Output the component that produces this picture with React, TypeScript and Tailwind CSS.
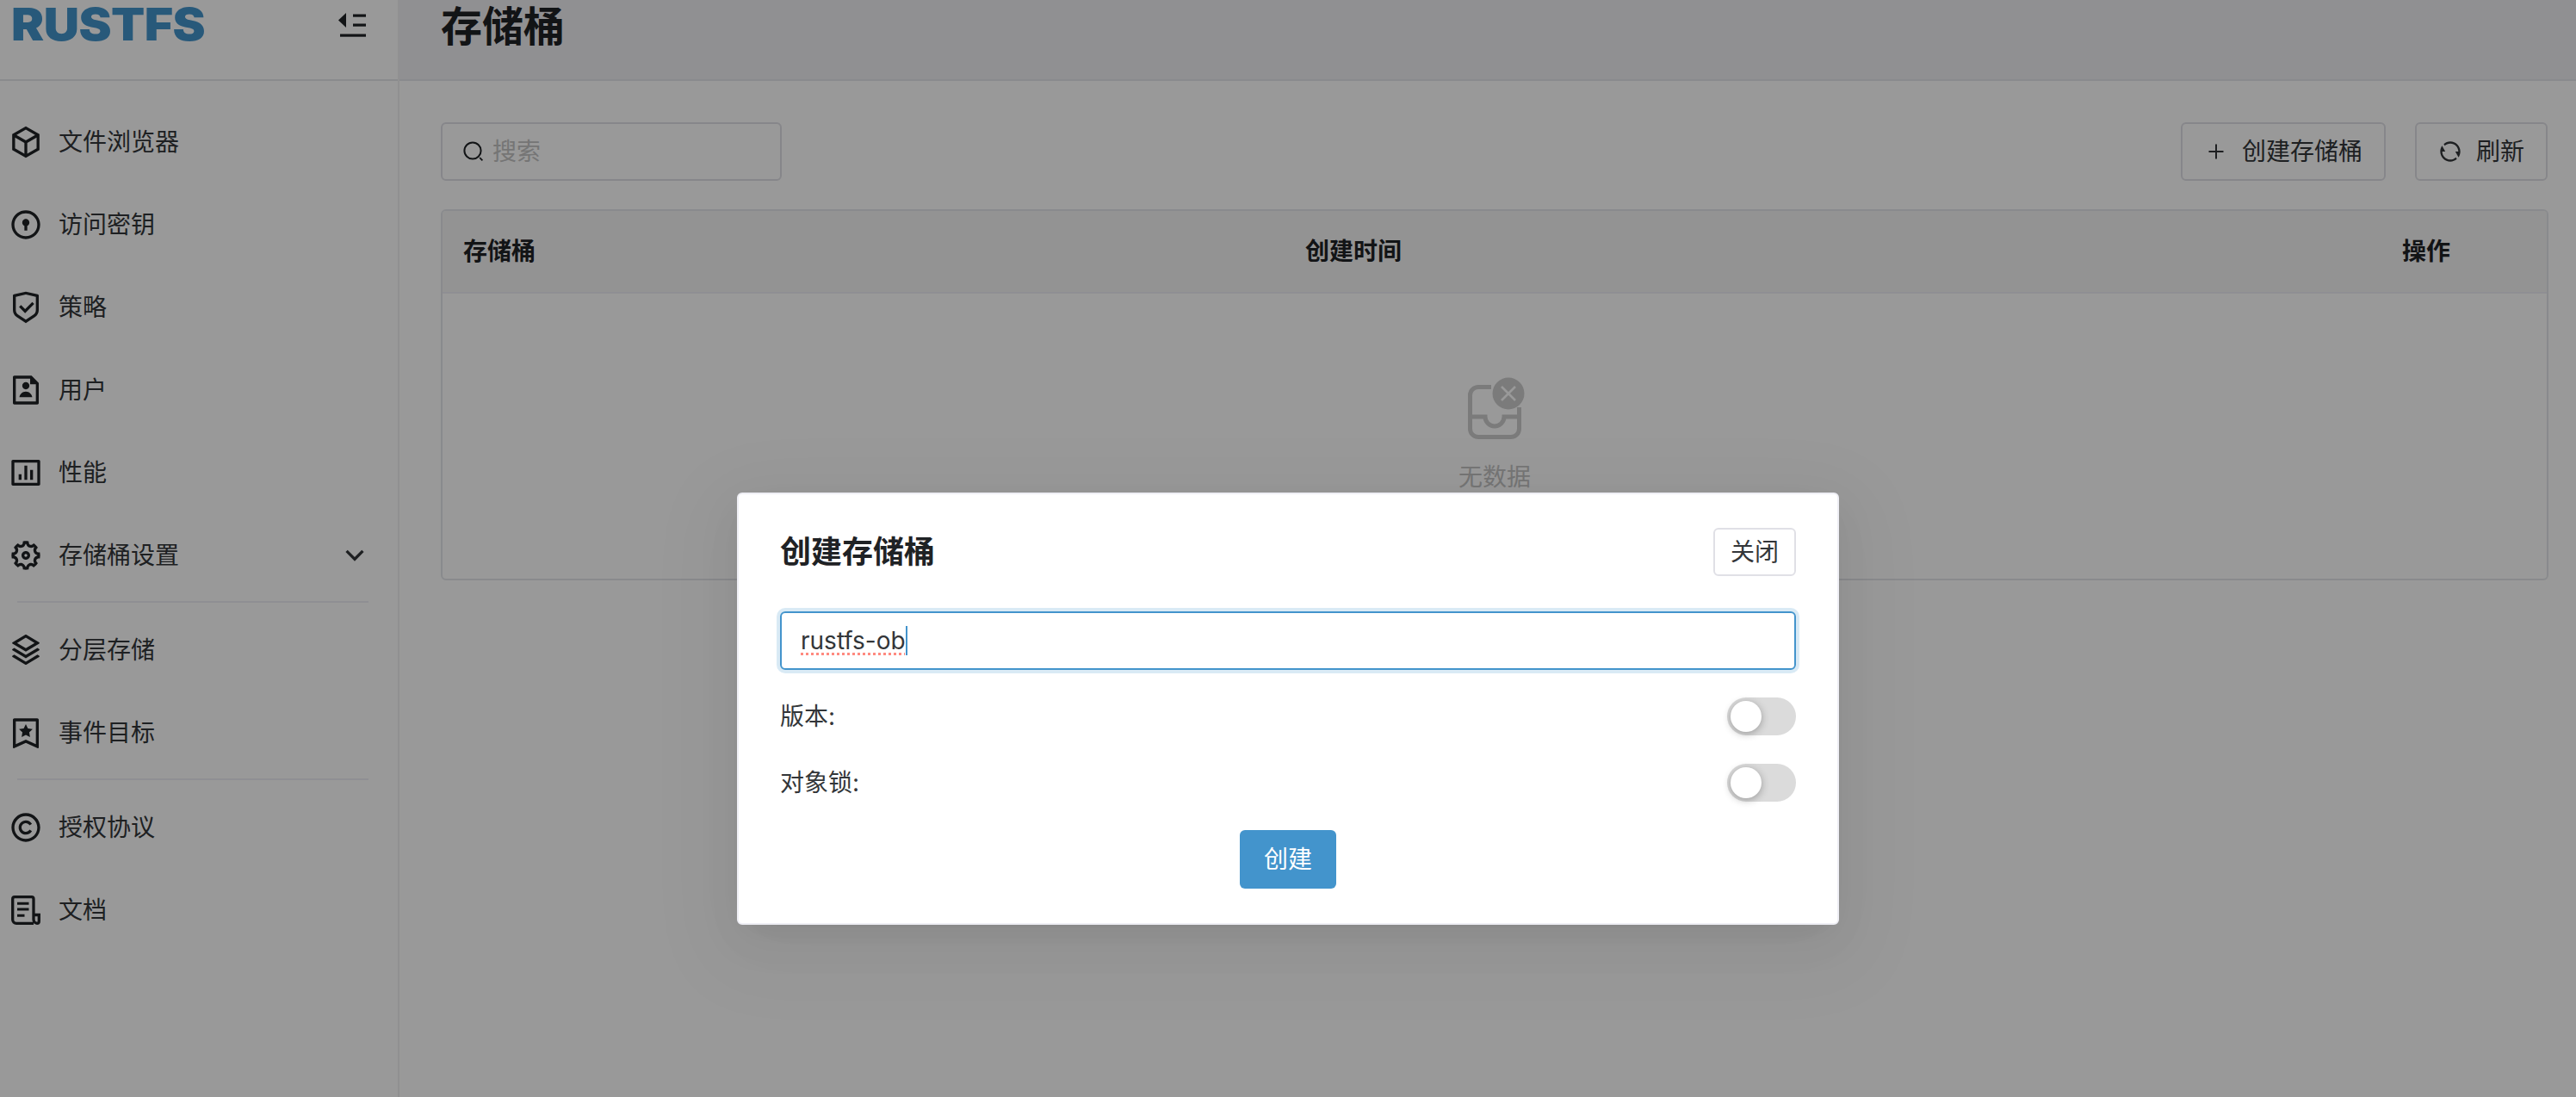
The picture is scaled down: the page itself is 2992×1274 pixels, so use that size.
import React from "react";
import {
  RiBox3Line,
  RiDoorLockLine,
  RiShieldCheckLine,
  RiFileUserLine,
  RiBarChartBoxLine,
  RiSettings5Line,
  RiArrowDownSLine,
  RiStackLine,
  RiBookmark3Line,
  RiCopyrightLine,
  RiRefreshLine,
} from "react-icons/ri";

function DocIcon({ size = 40, className }: { size?: number; className?: string }) {
  return (
    <svg width={size} height={size} viewBox="0 0 40 40" fill="none" stroke="currentColor" className={className}>
      <path
        d="M29 35.3 H9 a4.3 4.3 0 0 1 -4.3 -4.3 V7 a2.3 2.3 0 0 1 2.3 -2.3 H26.7 a2.3 2.3 0 0 1 2.3 2.3 V31 a4.3 4.3 0 0 0 4 4.3 a2.3 2.3 0 0 0 2.3 -2.3 V25.5 H29"
        strokeWidth="3.3"
      />
      <path d="M10 12.3 H23.5 M10 18.9 H23.5 M10 26.3 H18.5" strokeWidth="3" />
    </svg>
  );
}

function NavRow({ icon: Icon, label, chevron }: { icon: React.ComponentType<{ size?: number; className?: string }>; label: string; chevron?: boolean }) {
  return (
    <div className="flex h-[96px] items-center pl-[10px] pr-[30px] text-[28px] leading-[40px] text-[#333639]">
      <Icon size={40} className="shrink-0 text-[#1f2225]" />
      <span className="ml-[18px] flex-1">{label}</span>
      {chevron && <RiArrowDownSLine size={40} className="text-[#333639]" />}
    </div>
  );
}

function Divider() {
  return <div className="mb-[7px] ml-[20px] mt-[5px] h-[2px] w-[408px] bg-[#efeff5]" />;
}

function CollapseIcon() {
  return (
    <svg width="34" height="30" viewBox="0 0 34 30" className="text-[#1f2225]">
      <path d="M0 8.5 L9 0 V17 Z" fill="currentColor" />
      <rect x="17" y="1.5" width="15" height="3.2" fill="currentColor" />
      <rect x="17" y="12.5" width="15" height="3.2" fill="currentColor" />
      <rect x="2" y="24.5" width="30" height="3.2" fill="currentColor" />
    </svg>
  );
}

function SearchIcon() {
  return (
    <svg width="28" height="28" viewBox="0 0 28 28" fill="none" stroke="#1f2225" className="shrink-0">
      <circle cx="13" cy="13" r="9.6" strokeWidth="2" />
      <path d="M21.2 21.2 L24.4 24.4" strokeWidth="1.8" />
    </svg>
  );
}

function PlusIcon() {
  return (
    <svg width="28" height="28" viewBox="0 0 28 28" stroke="#333639" strokeWidth="2" className="shrink-0">
      <path d="M14 5.5 V22.5 M5.5 14 H22.5" />
    </svg>
  );
}

function EmptyIcon() {
  return (
    <svg width="80" height="80" viewBox="0 0 80 80" fill="none" className="ml-[7px]">
      <path
        d="M32 16.5 H17 a9.5 9.5 0 0 0 -9.5 9.5 V65 a9.5 9.5 0 0 0 9.5 9.5 H55 a9.5 9.5 0 0 0 9.5 -9.5 V40"
        stroke="#cdcdcd"
        strokeWidth="5"
      />
      <path d="M7.5 51 H25 a11 11 0 0 0 22 0 H64.5" stroke="#cdcdcd" strokeWidth="5" />
      <circle cx="52" cy="24" r="18.5" fill="#cdcdcd" />
      <path d="M44 16 L60 32 M60 16 L44 32" stroke="#ffffff" strokeWidth="2.6" />
    </svg>
  );
}

function Toggle() {
  return (
    <div className="flex h-[44px] w-[80px] items-center rounded-full bg-[#dbdbdb] pl-[4px]">
      <div className="h-[36px] w-[36px] rounded-full bg-white shadow-[0_2px_10px_0_rgba(0,0,0,0.3)]" />
    </div>
  );
}

export default function App() {
  return (
    <div
      className="relative flex h-[1274px] w-[2992px] overflow-hidden bg-white text-[#333639]"
      style={{ fontFamily: 'Inter, "Noto Sans CJK SC", sans-serif' }}
    >
      <aside className="flex w-[464px] shrink-0 flex-col border-r-2 border-[#f0f0f2]">
        <div className="flex h-[94px] shrink-0 items-start justify-between border-b-2 border-[#e5e7eb] pl-[13px] pr-[35px]">
          <div className="origin-left scale-x-[1.1] text-[52px] font-black leading-[58px] tracking-[-0.5px] text-[#4394cc]">RUSTFS</div>
          <div className="mt-[15px]">
            <CollapseIcon />
          </div>
        </div>
        <nav className="flex flex-col pt-[23px]">
          <NavRow icon={RiBox3Line} label="文件浏览器" />
          <NavRow icon={RiDoorLockLine} label="访问密钥" />
          <NavRow icon={RiShieldCheckLine} label="策略" />
          <NavRow icon={RiFileUserLine} label="用户" />
          <NavRow icon={RiBarChartBoxLine} label="性能" />
          <NavRow icon={RiSettings5Line} label="存储桶设置" chevron />
          <Divider />
          <NavRow icon={RiStackLine} label="分层存储" />
          <NavRow icon={RiBookmark3Line} label="事件目标" />
          <Divider />
          <NavRow icon={RiCopyrightLine} label="授权协议" />
          <NavRow icon={DocIcon} label="文档" />
        </nav>
      </aside>

      <main className="flex min-w-0 flex-1 flex-col">
        <header className="h-[94px] shrink-0 border-b-2 border-[#e5e7eb] bg-[#f0f0f3] pl-[48px] pt-[4px]">
          <h1 className="text-[48px] font-bold leading-[54px] text-[#1f2225]">存储桶</h1>
        </header>
        <div className="flex flex-col pl-[48px] pr-[32px] pt-[48px]">
          <div className="flex items-center justify-between">
            <div className="flex h-[68px] w-[396px] items-center gap-[8px] rounded-[6px] border-2 border-[#e0e0e6] pl-[22px] text-[28px]">
              <SearchIcon />
              <span className="text-[#c4c4c4]">搜索</span>
            </div>
            <div className="mr-[1px] flex gap-[34px]">
              <div className="flex h-[68px] items-center gap-[16px] rounded-[6px] border-2 border-[#e0e0e6] px-[25px] text-[28px]">
                <PlusIcon />
                <span>创建存储桶</span>
              </div>
              <div className="flex h-[68px] items-center gap-[16px] rounded-[6px] border-2 border-[#e0e0e6] px-[25px] text-[28px]">
                <RiRefreshLine size={28} className="text-[#333639]" />
                <span>刷新</span>
              </div>
            </div>
          </div>
          <div className="mt-[33px] flex h-[431px] flex-col overflow-hidden rounded-[6px] border-2 border-[#e5e7eb]">
            <div className="grid h-[96px] shrink-0 grid-cols-[978px_1274px_1fr] items-center border-b-2 border-[#efeff5] bg-[#f5f5f5] px-[24px] text-[28px] font-semibold text-[#1f2225]">
              <span>存储桶</span>
              <span>创建时间</span>
              <span>操作</span>
            </div>
            <div className="flex flex-col items-center pt-[92px]">
              <EmptyIcon />
              <div className="mt-[21px] text-[28px] leading-[40px] text-[#c4c4c4]">无数据</div>
            </div>
          </div>
        </div>
      </main>

      <div className="absolute inset-0 flex justify-center bg-black/40 pt-[572px]">
        <div className="flex h-[502px] w-[1280px] flex-col rounded-[6px] border-2 border-[#efeff5] bg-white px-[48px] pt-[39px] shadow-[0_12px_32px_-18px_rgba(0,0,0,0.08),0_18px_56px_0_rgba(0,0,0,0.05),0_24px_96px_32px_rgba(0,0,0,0.03)]">
          <div className="flex items-center justify-between">
            <h2 className="text-[36px] font-semibold leading-[48px] text-[#1f2225]">创建存储桶</h2>
            <div className="flex h-[56px] w-[96px] items-center justify-center rounded-[6px] border-2 border-[#e0e0e6] text-[28px]">关闭</div>
          </div>
          <div className="mt-[41px] flex h-[68px] items-center rounded-[6px] border-2 border-[#4394cc] pl-[22px] text-[28px] shadow-[0_0_0_4px_rgba(67,148,204,0.2)]">
            <span className="underline decoration-[#ff8a80] decoration-dotted decoration-[3px] underline-offset-[4px]">rustfs-ob</span>
            <span className="h-[34px] w-[2px] bg-[#4394cc]" />
          </div>
          <div className="mt-[32px] flex h-[44px] items-center justify-between text-[28px]">
            <span>版本:</span>
            <Toggle />
          </div>
          <div className="mt-[33px] flex h-[44px] items-center justify-between text-[28px]">
            <span>对象锁:</span>
            <Toggle />
          </div>
          <div className="mt-[33px] flex justify-center">
            <div className="flex h-[68px] w-[112px] items-center justify-center rounded-[6px] bg-[#4394cc] text-[28px] text-white">创建</div>
          </div>
        </div>
      </div>
    </div>
  );
}
